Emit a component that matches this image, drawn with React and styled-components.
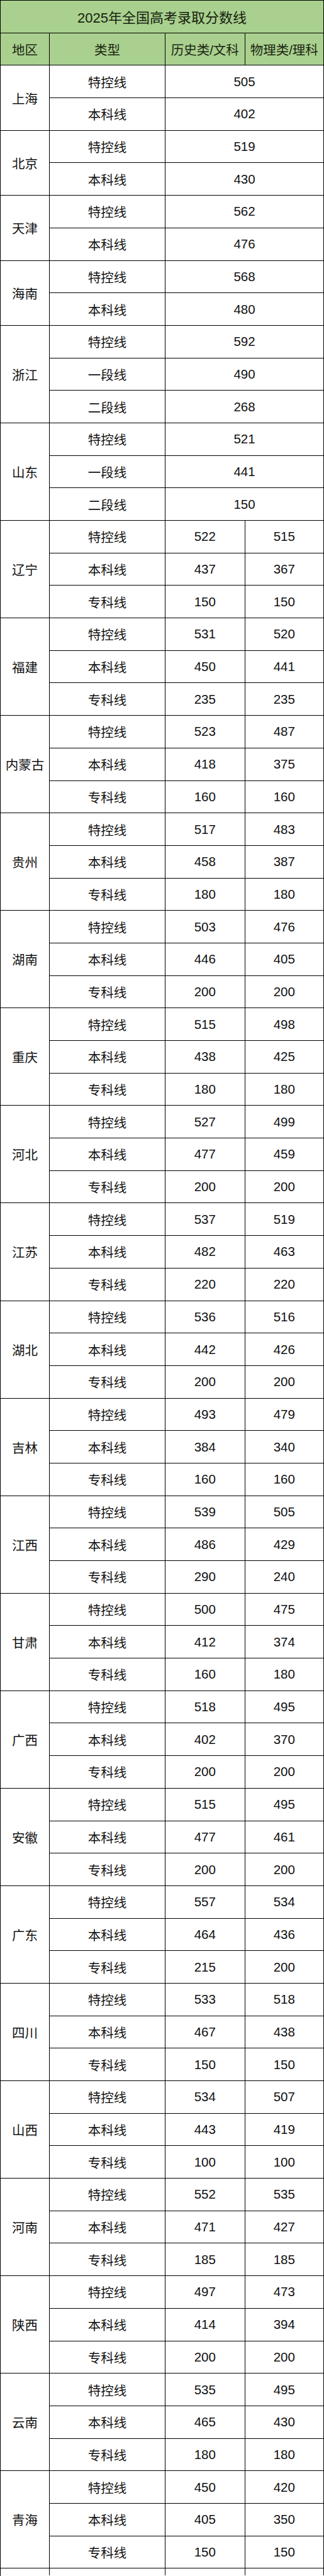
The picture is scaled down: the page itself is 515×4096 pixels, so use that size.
import styled, { createGlobalStyle } from "styled-components";

const GlobalStyle = createGlobalStyle`
    html, body {
        margin: 0;
        padding: 0;
        background: #ffffff;
    }
    body {
        font-family: "Liberation Sans", "Noto Sans CJK SC", sans-serif;
        color: #000;
    }
`;

// one entry per province; a single value means both columns share it
const provinces = [
    { name: "上海", rows: [["特控线", "505"], ["本科线", "402"]] },
    { name: "北京", rows: [["特控线", "519"], ["本科线", "430"]] },
    { name: "天津", rows: [["特控线", "562"], ["本科线", "476"]] },
    { name: "海南", rows: [["特控线", "568"], ["本科线", "480"]] },
    { name: "浙江", rows: [["特控线", "592"], ["一段线", "490"], ["二段线", "268"]] },
    { name: "山东", rows: [["特控线", "521"], ["一段线", "441"], ["二段线", "150"]] },
    { name: "辽宁", rows: [["特控线", "522", "515"], ["本科线", "437", "367"], ["专科线", "150", "150"]] },
    { name: "福建", rows: [["特控线", "531", "520"], ["本科线", "450", "441"], ["专科线", "235", "235"]] },
    { name: "内蒙古", rows: [["特控线", "523", "487"], ["本科线", "418", "375"], ["专科线", "160", "160"]] },
    { name: "贵州", rows: [["特控线", "517", "483"], ["本科线", "458", "387"], ["专科线", "180", "180"]] },
    { name: "湖南", rows: [["特控线", "503", "476"], ["本科线", "446", "405"], ["专科线", "200", "200"]] },
    { name: "重庆", rows: [["特控线", "515", "498"], ["本科线", "438", "425"], ["专科线", "180", "180"]] },
    { name: "河北", rows: [["特控线", "527", "499"], ["本科线", "477", "459"], ["专科线", "200", "200"]] },
    { name: "江苏", rows: [["特控线", "537", "519"], ["本科线", "482", "463"], ["专科线", "220", "220"]] },
    { name: "湖北", rows: [["特控线", "536", "516"], ["本科线", "442", "426"], ["专科线", "200", "200"]] },
    { name: "吉林", rows: [["特控线", "493", "479"], ["本科线", "384", "340"], ["专科线", "160", "160"]] },
    { name: "江西", rows: [["特控线", "539", "505"], ["本科线", "486", "429"], ["专科线", "290", "240"]] },
    { name: "甘肃", rows: [["特控线", "500", "475"], ["本科线", "412", "374"], ["专科线", "160", "180"]] },
    { name: "广西", rows: [["特控线", "518", "495"], ["本科线", "402", "370"], ["专科线", "200", "200"]] },
    { name: "安徽", rows: [["特控线", "515", "495"], ["本科线", "477", "461"], ["专科线", "200", "200"]] },
    { name: "广东", rows: [["特控线", "557", "534"], ["本科线", "464", "436"], ["专科线", "215", "200"]] },
    { name: "四川", rows: [["特控线", "533", "518"], ["本科线", "467", "438"], ["专科线", "150", "150"]] },
    { name: "山西", rows: [["特控线", "534", "507"], ["本科线", "443", "419"], ["专科线", "100", "100"]] },
    { name: "河南", rows: [["特控线", "552", "535"], ["本科线", "471", "427"], ["专科线", "185", "185"]] },
    { name: "陕西", rows: [["特控线", "497", "473"], ["本科线", "414", "394"], ["专科线", "200", "200"]] },
    { name: "云南", rows: [["特控线", "535", "495"], ["本科线", "465", "430"], ["专科线", "180", "180"]] },
    { name: "青海", rows: [["特控线", "450", "420"], ["本科线", "405", "350"], ["专科线", "150", "150"]] },
];

export default function App() {
    return (
        <>
            <GlobalStyle />
            <Sheet>
                <Title>2025年全国高考录取分数线</Title>
                <HeadCell>地区</HeadCell>
                <HeadCell>类型</HeadCell>
                <HeadCell>历史类/文科</HeadCell>
                <HeadCell>物理类/理科</HeadCell>
                {provinces.map((province) => [
                    <Region key={province.name} $span={province.rows.length}>
                        {province.name}
                    </Region>,
                    ...province.rows.map(([kind, first, second]) => [
                        <Cell key={province.name + kind}>{kind}</Cell>,
                        second === undefined ? (
                            <Cell key={province.name + kind + "v"} $wide>
                                {first}
                            </Cell>
                        ) : (
                            [
                                <Cell key={province.name + kind + "h"}>{first}</Cell>,
                                <Cell key={province.name + kind + "p"}>{second}</Cell>,
                            ]
                        ),
                    ]),
                ])}
                <Tail />
                <Tail />
                <Tail />
                <Tail />
            </Sheet>
        </>
    );
}

const Sheet = styled.div`
    width: 515px;
    display: grid;
    grid-template-columns: 78px 184px 126.5px 1fr;
    grid-auto-rows: 51.7px;
    box-sizing: border-box;
    border-left: 1.5px solid #000;
    border-top: 1.5px solid #000;
`;
const Cell = styled.div`
    grid-column: ${(props) => (props.$wide ? "span 2" : "auto")};
    display: flex;
    align-items: center;
    justify-content: center;
    box-sizing: border-box;
    border-right: 1.5px solid #000;
    border-bottom: 1.5px solid #000;
    background: #ffffff;
    font-size: 20.5px;
    color: #111;
    white-space: nowrap;
`;
const Region = styled(Cell)`
    grid-row: span ${(props) => props.$span};
`;
const HeadCell = styled(Cell)`
    background: #a9d08e;
    color: #1b2613;
    font-size: 20.5px;
`;
const Title = styled(HeadCell)`
    grid-column: span 4;
    font-size: 22px;
    color: #16220f;
`;
const Tail = styled.div`
    height: 11px;
    box-sizing: border-box;
    border-right: 1.5px solid #000;
`;
